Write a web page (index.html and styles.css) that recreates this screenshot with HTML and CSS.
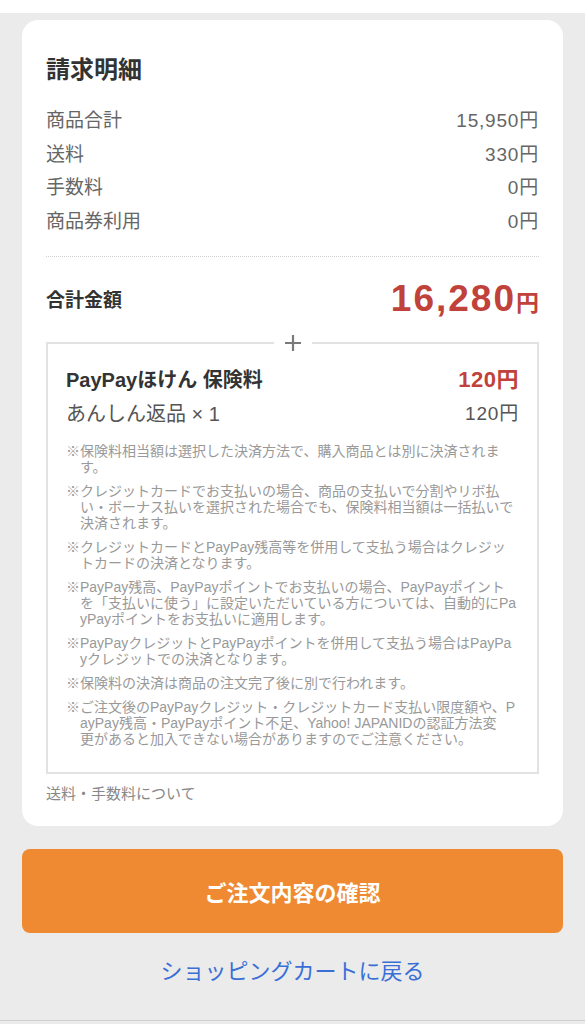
FILE: index.html
```html
<!DOCTYPE html>
<html lang="ja">
<head>
    <meta charset="UTF-8">
    <meta name="viewport" content="width=device-width, initial-scale=1.0">
    <title>請求明細</title>
    <link rel="stylesheet" href="styles.css">
</head>
<body>

<div class="topbar"></div>

<main class="page">
    <section class="card">
        <h2 class="card-title">請求明細</h2>

        <div class="price-list">
            <div class="price-row"><span>商品合計</span><span class="num">15,950円</span></div>
            <div class="price-row"><span>送料</span><span class="num">330円</span></div>
            <div class="price-row"><span>手数料</span><span class="num">0円</span></div>
            <div class="price-row"><span>商品券利用</span><span class="num">0円</span></div>
        </div>

        <div class="total-row">
            <span class="total-label">合計金額</span>
            <span class="total-price">16,280<small>円</small></span>
        </div>

        <div class="insurance">
            <span class="plus">
                <svg width="18" height="18" viewBox="0 0 18 18"><path d="M9 1v16M1 9h16" stroke="#7a7a7a" stroke-width="2.2" fill="none"/></svg>
            </span>
            <div class="ins-head">
                <span>PayPayほけん 保険料</span>
                <span class="ins-price">120円</span>
            </div>
            <div class="ins-item">
                <span>あんしん返品 × 1</span>
                <span class="num">120円</span>
            </div>
            <ul class="notes">
                <li>※保険料相当額は選択した決済方法で、購入商品とは別に決済されま<br>す。</li>
                <li>※クレジットカードでお支払いの場合、商品の支払いで分割やリボ払<br>い・ボーナス払いを選択された場合でも、保険料相当額は一括払いで<br>決済されます。</li>
                <li>※クレジットカードとPayPay残高等を併用して支払う場合はクレジッ<br>トカードの決済となります。</li>
                <li>※PayPay残高、PayPayポイントでお支払いの場合、PayPayポイント<br>を「支払いに使う」に設定いただいている方については、自動的にPa<br>yPayポイントをお支払いに適用します。</li>
                <li>※PayPayクレジットとPayPayポイントを併用して支払う場合はPayPa<br>yクレジットでの決済となります。</li>
                <li>※保険料の決済は商品の注文完了後に別で行われます。</li>
                <li>※ご注文後のPayPayクレジット・クレジットカード支払い限度額や、P<br>ayPay残高・PayPayポイント不足、Yahoo! JAPANIDの認証方法変<br>更があると加入できない場合がありますのでご注意ください。</li>
            </ul>
        </div>

        <a href="#" class="fee-link">送料・手数料について</a>
    </section>

    <button class="btn-confirm">ご注文内容の確認</button>

    <a href="#" class="back-link">ショッピングカートに戻る</a>
</main>

<div class="bottom-line"></div>

</body>
</html>
```

FILE: styles.css
```css
body {
    margin: 0;
    padding: 0;
    background-color: #ebebeb;
    font-family: "Liberation Sans", "Noto Sans CJK JP", sans-serif;
    color: #666;
}

.topbar {
    height: 13px;
    background-color: #fff;
}

.page {
    padding: 7px 22px 0;
    height: 1010px;
    box-sizing: border-box;
}

.card {
    background-color: #fff;
    border-radius: 16px;
    padding: 35px 24px 23px;
}

.card-title {
    margin: 0;
    font-size: 24px;
    line-height: 30px;
    font-weight: bold;
    color: #333;
}

.price-list {
    margin-top: 19px;
    padding-bottom: 17px;
    border-bottom: 1px dotted #d0d0d0;
}

.price-row {
    display: flex;
    justify-content: space-between;
    font-size: 19px;
    line-height: 33.7px;
    color: #666;
}

.num {
    font-size: 19px;
    letter-spacing: 0.8px;
}

.total-row {
    display: flex;
    justify-content: space-between;
    align-items: center;
    height: 50px;
    margin-top: 17px;
}

.total-label {
    font-size: 19px;
    font-weight: bold;
    color: #333;
}

.total-price {
    font-size: 37px;
    font-weight: bold;
    color: #c0423a;
    letter-spacing: 2px;
}

.total-price small {
    font-size: 23px;
    letter-spacing: 0;
}

.insurance {
    position: relative;
    margin-top: 18px;
    border: 2px solid #e2e2e2;
    padding: 22px 14px 25px 18px;
}

.plus {
    position: absolute;
    top: -10px;
    left: 50%;
    transform: translateX(-50%);
    background-color: #fff;
    padding: 0 10px;
    line-height: 0;
}

.ins-head {
    display: flex;
    justify-content: space-between;
    align-items: center;
    padding-right: 4px;
    font-size: 20px;
    line-height: 28px;
    font-weight: bold;
    color: #333;
}

.ins-price {
    font-size: 22px;
    color: #c0423a;
    letter-spacing: 0.5px;
}

.ins-item {
    display: flex;
    justify-content: space-between;
    margin-top: 6px;
    padding-right: 4px;
    font-size: 20px;
    line-height: 28px;
    color: #555;
}

.notes {
    list-style: none;
    margin: 15px 0 0;
    padding: 0;
    font-size: 14px;
    line-height: 16px;
    white-space: nowrap;
    color: #999;
}

.notes li {
    padding-left: 1em;
    text-indent: -1em;
    margin-bottom: 8px;
}

.notes li:last-child {
    margin-bottom: 0;
}

.fee-link {
    display: block;
    margin-top: 11px;
    font-size: 15px;
    line-height: 18px;
    color: #888;
    text-decoration: none;
}

.btn-confirm {
    display: block;
    width: 100%;
    height: 84px;
    margin-top: 23px;
    border: none;
    border-radius: 8px;
    background-color: #ef8a32;
    color: #fff;
    font-family: "Liberation Sans", "Noto Sans CJK JP", sans-serif;
    font-size: 22px;
    font-weight: bold;
    cursor: pointer;
}

.back-link {
    display: block;
    margin-top: 20px;
    text-align: center;
    font-size: 22px;
    color: #3a6fd6;
    text-decoration: none;
}

.bottom-line {
    height: 1px;
    background-color: #cfcfcf;
    margin-top: -3px;
}
```
